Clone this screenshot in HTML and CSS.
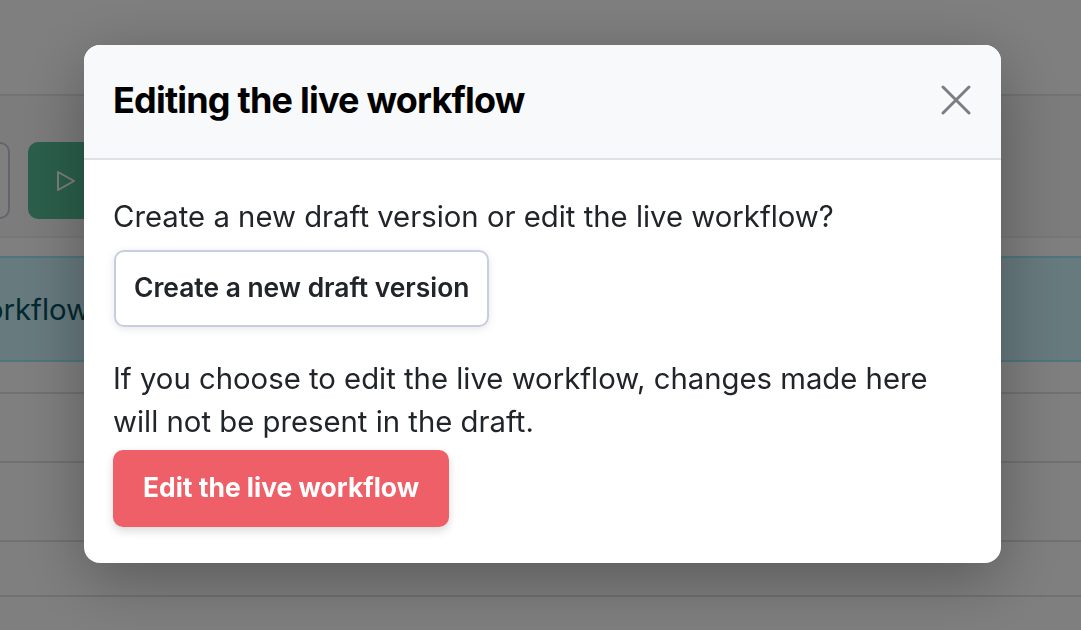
FILE: index.html
```html
<!DOCTYPE html>
<html lang="en">
<head>
    <meta charset="UTF-8">
    <meta name="viewport" content="width=device-width, initial-scale=1.0">
    <title>Editing the live workflow</title>
    <link rel="stylesheet" href="styles.css">
</head>
<body>
    <!-- Page behind the modal -->
    <div class="page">
        <header class="topbar"></header>
        <div class="toolbar">
            <div class="btn-outline"></div>
            <div class="btn-run">
                <svg class="play-icon" width="20" height="22" viewBox="0 0 20 22" fill="none" stroke="currentColor" stroke-width="2" stroke-linejoin="round">
                    <path d="M2 2 L18 11 L2 20 Z"/>
                </svg>
            </div>
        </div>
        <div class="banner"><span class="banner-text">This is the live workflow</span></div>
        <div class="row row-a"></div>
        <div class="row row-b"></div>
        <div class="row row-c"></div>
        <div class="row row-d"></div>
    </div>

    <div class="backdrop">
        <div class="modal">
            <div class="modal-header">
                <h1>Editing the live workflow</h1>
                <button class="close" aria-label="Close">
                    <svg width="30" height="30" viewBox="0 0 30 30" fill="none" stroke="currentColor" stroke-width="3" stroke-linecap="round">
                        <path d="M2 2 L28 28 M28 2 L2 28"/>
                    </svg>
                </button>
            </div>
            <div class="modal-body">
                <p>Create a new draft version or edit the live workflow?</p>
                <button class="btn btn-light">Create a new draft version</button>
                <p class="second">If you choose to edit the live workflow, changes made here will not be present in the draft.</p>
                <button class="btn btn-danger">Edit the live workflow</button>
            </div>
        </div>
    </div>
</body>
</html>
```

FILE: styles.css
```css
* {
    box-sizing: border-box;
}
html, body {
    height: 100%;
}
body {
    margin: 0;
    overflow: hidden;
    font-family: Inter, "Liberation Sans", sans-serif;
    background-color: #fff;
    color: #212529;
}
.page {
    height: 630px;
    overflow: hidden;
}
.topbar {
    height: 96px;
    background-color: #fff;
    border-bottom: 2px solid #e4e6ea;
}
.toolbar {
    display: flex;
    gap: 18px;
    height: 142px;
    padding: 46px 0 0 0;
    background-color: #f8f9fa;
    border-bottom: 2px solid #eceef1;
}
.btn-outline {
    width: 10px;
    height: 77px;
    background-color: #fff;
    border: 2px solid #c5c9d8;
    border-left: 0;
    border-radius: 0 10px 10px 0;
}
.btn-run {
    display: flex;
    align-items: center;
    width: 120px;
    height: 77px;
    padding-left: 28px;
    background-color: #56bf96;
    border-radius: 10px;
    color: #fff;
}
.banner {
    height: 106px;
    margin-top: 18px;
    display: flex;
    align-items: center;
    background-color: #cff4fc;
    border-top: 2px solid #9eeaf9;
    border-bottom: 2px solid #9eeaf9;
    color: #055160;
    font-size: 29.3px;
}
.banner-text {
    margin-left: -243px;
    white-space: nowrap;
}
.row {
    border-bottom: 2px solid #dee2e6;
}
.row-a { height: 32px; }
.row-b { height: 69px; }
.row-c { height: 79px; }
.row-d { height: 55px; }

.backdrop {
    position: fixed;
    inset: 0;
    background-color: rgba(0, 0, 0, 0.5);
    padding: 45px 80px 0 84px;
}
.modal {
    width: 917px;
    height: 518px;
    background-color: #fff;
    border-radius: 16px;
    overflow: hidden;
    box-shadow: 0 16px 64px rgba(0, 0, 0, 0.3);
}
.modal-header {
    display: flex;
    align-items: center;
    justify-content: space-between;
    height: 115px;
    padding: 0 30px 4px 29px;
    background-color: #f8f9fa;
    border-bottom: 2px solid #dee2e6;
}
.modal-header h1 {
    margin: 0;
    font-size: 36px;
    font-weight: 700;
    letter-spacing: -0.8px;
    color: #000;
}
.close {
    display: flex;
    padding: 0;
    border: 0;
    background: none;
    color: #7b7f83;
}
.modal-body {
    padding: 35px 29px 0 29px;
}
.modal-body p {
    margin: 0 0 12px;
    font-size: 29.3px;
    line-height: 43px;
}
.modal-body p.second {
    margin-top: 30px;
    margin-bottom: 7px;
    width: 840px;
}
.btn {
    display: block;
    height: 77px;
    padding: 0 30px 3px;
    border-radius: 10px;
    font-family: inherit;
    font-size: 26.4px;
    font-weight: 600;
}
.btn-light {
    margin-left: 1px;
    padding: 0 18px 3px;
    background-color: #fff;
    border: 2px solid #c9cde0;
    color: #212529;
    box-shadow: 0 2px 8px rgba(0, 0, 0, 0.1);
}
.btn-danger {
    background-color: #ee5f68;
    border: 0;
    color: #fff;
    font-weight: 700;
    box-shadow: 0 4px 10px rgba(0, 0, 0, 0.15);
}
```
